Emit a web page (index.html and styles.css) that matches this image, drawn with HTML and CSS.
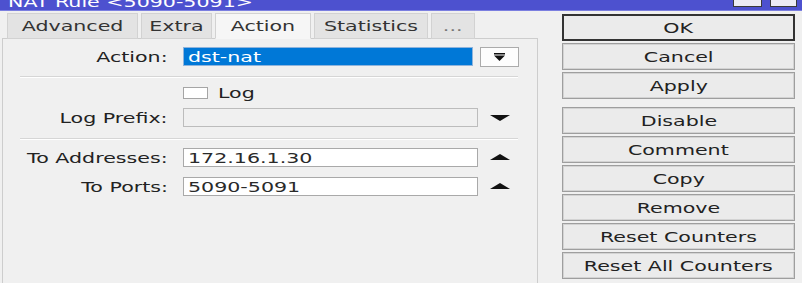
FILE: index.html
```html
<!DOCTYPE html>
<html lang="en">
<head>
  <meta charset="UTF-8">
  <meta name="viewport" content="width=device-width, initial-scale=1.0">
  <title>NAT Rule &lt;5090-5091&gt;</title>
  <link rel="stylesheet" href="styles.css">
</head>
<body>

  <div class="window">
    <!-- Title bar (cut off at the top) -->
    <div class="titlebar">
      <span class="title sx">NAT Rule &lt;5090-5091&gt;</span>
      <div class="winbtns">
        <span class="winbtn"></span>
        <span class="winbtn"></span>
      </div>
    </div>

    <div class="main">
      <!-- Tabs + form -->
      <div class="left">
        <div class="tabs">
          <div class="tab tab-advanced"><span class="sx">Advanced</span></div>
          <div class="tab tab-extra"><span class="sx">Extra</span></div>
          <div class="tab tab-action active"><span class="sx">Action</span></div>
          <div class="tab tab-stats"><span class="sx">Statistics</span></div>
          <div class="tab tab-more"><span class="sx">...</span></div>
        </div>

        <div class="panel">
          <div class="row row-action">
            <div class="label"><span class="sx">Action:</span></div>
            <div class="field select"><span class="sx">dst-nat</span></div>
            <div class="dropbtn">
              <svg width="11" height="8" viewBox="0 0 11 8">
                <rect x="0" y="0" width="11" height="1.5" fill="#111"/>
                <polygon points="0,2.5 11,2.5 5.5,8" fill="#111"/>
              </svg>
            </div>
          </div>

          <div class="separator sep-first"></div>

          <div class="row row-check">
            <span class="checkbox"></span>
            <span class="sx check-text">Log</span>
          </div>

          <div class="row row-prefix">
            <div class="label"><span class="sx">Log Prefix:</span></div>
            <div class="field disabled"></div>
            <span class="arrow down"></span>
          </div>

          <div class="separator sep-second"></div>

          <div class="row row-addr">
            <div class="label"><span class="sx">To Addresses:</span></div>
            <div class="field"><span class="sx">172.16.1.30</span></div>
            <span class="arrow up"></span>
          </div>

          <div class="row row-ports">
            <div class="label"><span class="sx">To Ports:</span></div>
            <div class="field"><span class="sx">5090-5091</span></div>
            <span class="arrow up"></span>
          </div>
        </div>
      </div>

      <!-- Botones de la derecha -->
      <div class="buttons">
        <div class="btn default"><span class="sx">OK</span></div>
        <div class="btn"><span class="sx">Cancel</span></div>
        <div class="btn"><span class="sx">Apply</span></div>
        <div class="btn spaced"><span class="sx">Disable</span></div>
        <div class="btn"><span class="sx">Comment</span></div>
        <div class="btn"><span class="sx">Copy</span></div>
        <div class="btn"><span class="sx">Remove</span></div>
        <div class="btn"><span class="sx">Reset Counters</span></div>
        <div class="btn"><span class="sx">Reset All Counters</span></div>
      </div>
    </div>
  </div>

</body>
</html>
```

FILE: styles.css
```css
* {
  margin: 0;
  padding: 0;
  box-sizing: border-box;
}

body, html {
  width: 100%;
  height: 100%;
  overflow: hidden;
  background: #f0f0f0;
  font-family: "DejaVu Sans", "Liberation Sans", sans-serif;
  font-size: 14px;
  color: #222;
}

.window {
  display: flex;
  flex-direction: column;
  width: 802px;
  height: 283px;
}

/* the screenshot is stretched sideways, so the text is too */
.sx {
  display: inline-block;
  white-space: nowrap;
  transform: scaleX(1.47);
}

.titlebar {
  height: 11px;
  display: flex;
  justify-content: space-between;
  align-items: flex-start;
  padding-left: 8px;
  background: #4d51cf;
  border-bottom: 1px solid #7b7fe0;
  overflow: hidden;
}

.title {
  color: white;
  line-height: 14px;
  margin-top: -5px;
  transform-origin: left center;
}

.winbtns {
  display: flex;
  gap: 8px;
  padding-right: 5px;
}

.winbtn {
  width: 29px;
  height: 7px;
  border: 1px solid #3a3a3a;
  border-top: none;
  background: #ececf4;
}

.winbtn + .winbtn {
  width: 27px;
}

.main {
  flex: 1;
  display: flex;
  min-height: 0;
}

.left {
  width: 538px;
  display: flex;
  flex-direction: column;
}

.tabs {
  display: flex;
  gap: 3px;
  height: 26px;
  margin-top: 2px;
  margin-bottom: -1px;
  padding-left: 7px;
  position: relative;
  z-index: 1;
}

.tab {
  display: flex;
  align-items: center;
  justify-content: center;
  height: 26px;
  border: 1px solid #d2d2d2;
  background: #e3e3e3;
  color: #333;
}

.tab.active {
  background: #f6f6f6;
  border-bottom-color: #f6f6f6;
}

.tab-advanced { width: 131px; }
.tab-extra { width: 71px; }
.tab-action { width: 96px; }
.tab-stats { width: 114px; }
.tab-more { width: 44px; color: #777; }

.panel {
  flex: 1;
  margin-left: 2px;
  padding-top: 8px;
  border: 1px solid #cdcdcd;
  border-bottom: none;
  background: #f0f0f0;
}

.row {
  display: flex;
  align-items: center;
  height: 19px;
}

.label {
  width: 165px;
  margin-right: 15px;
  text-align: right;
}

.label .sx {
  transform-origin: right center;
}

.field {
  display: flex;
  align-items: center;
  width: 295px;
  height: 19px;
  padding-left: 4px;
  border: 1px solid #a9a9a9;
  background: white;
  color: #2a2a2a;
}

.field .sx {
  transform-origin: left center;
}

.field.disabled {
  background: #f0f0f0;
  border-color: #bcbcbc;
}

.select {
  width: 290px;
  background: #0078d7;
  border-color: #8fb4dc;
  color: white;
}

.dropbtn {
  display: flex;
  align-items: center;
  justify-content: center;
  width: 39px;
  height: 20px;
  margin-left: 7px;
  border: 1px solid #ababab;
  background: #fdfdfd;
}

.arrow {
  width: 0;
  height: 0;
  margin-left: 12px;
  border-left: 10px solid transparent;
  border-right: 10px solid transparent;
}

.arrow.down {
  border-top: 6px solid #111;
}

.arrow.up {
  border-bottom: 6px solid #111;
  margin-top: -2px;
}

.separator {
  width: 498px;
  margin-left: 17px;
  border-top: 1px solid #d6d6d6;
  border-bottom: 1px solid white;
}

.sep-first { margin-top: 10px; }
.sep-second { margin-top: 11px; }

.row-check {
  height: 12px;
  margin-top: 9px;
  padding-left: 180px;
}

.checkbox {
  width: 25px;
  height: 12px;
  border: 1px solid #a5a5a5;
  background: white;
}

.check-text {
  margin-left: 10px;
  transform-origin: left center;
}

.row-prefix { margin-top: 9px; }
.row-addr { margin-top: 8px; }
.row-ports { margin-top: 10px; }

.buttons {
  display: flex;
  flex-direction: column;
  gap: 2px;
  width: 233px;
  margin-left: 24px;
  margin-top: 3px;
}

.btn {
  display: flex;
  align-items: center;
  justify-content: center;
  height: 27px;
  border: 1px solid #9e9e9e;
  box-shadow: inset 0 0 0 1px #d3d3d3;
  background: #ebebeb;
  color: #222;
}

.btn.default {
  border: 2px solid #333;
  box-shadow: none;
}

.btn.spaced {
  margin-top: 6px;
}
```
